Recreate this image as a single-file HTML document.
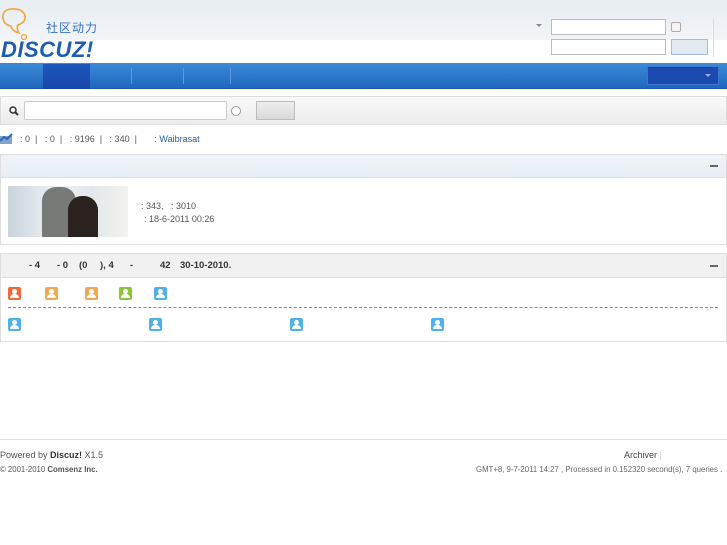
<!DOCTYPE html>
<html><head><meta charset="utf-8"><style>
*{margin:0;padding:0;box-sizing:border-box}
body{width:727px;height:545px;background:#fff;font-family:"Liberation Sans","Noto Sans CJK SC",sans-serif;font-size:9px;color:#444;position:relative;overflow:hidden}
.a{position:absolute}
.ico{position:absolute;width:13px;height:13px;border-radius:2px}
.ico:before{content:"";position:absolute;left:4px;top:2px;width:5px;height:5px;border-radius:50%;background:#fff}
.ico:after{content:"";position:absolute;left:2px;top:7px;width:9px;height:4px;border-radius:4px 4px 0 0;background:#fff}
.h{position:absolute;top:260px;font-weight:bold;color:#333;font-size:9.5px}
</style></head><body>
<div class="a" style="left:0;top:0;width:727px;height:40px;background:linear-gradient(#e8edf2,#f2f5f8)"></div>
<svg class="a" style="left:0;top:6px" width="32" height="34"><path d="M11 3 Q2 4 3 12 Q4 19 11 20 Q12 25 19 27 Q16 22 18 19 Q26 16 25 10 Q23 2 11 3Z" fill="none" stroke="#f3a63a" stroke-width="1.6"/><circle cx="24" cy="31" r="2.5" fill="none" stroke="#f3a63a" stroke-width="1.3"/></svg>
<div class="a" style="left:46px;top:21px;font-size:12px;line-height:14px;color:#3a71c0;letter-spacing:1px">社区动力</div>
<div class="a" style="left:1px;top:39px;font-size:22px;line-height:22px;font-weight:bold;font-style:italic;color:#1c5db5;letter-spacing:0.5px">DISCUZ!</div>
<div class="a" style="left:536px;top:24px;width:0;height:0;border:3px solid transparent;border-top-color:#888"></div>
<div class="a" style="left:551px;top:19px;width:115px;height:16px;border:1px solid #bbb;background:#fff"></div>
<div class="a" style="left:671px;top:22px;width:10px;height:10px;border:1px solid #aaa;border-radius:2px;background:#f4f4f4"></div>
<div class="a" style="left:551px;top:39px;width:115px;height:16px;border:1px solid #bbb;background:#fff"></div>
<div class="a" style="left:671px;top:39px;width:37px;height:16px;border:1px solid #a9bcd2;background:#e3e9f0"></div>
<div class="a" style="left:713px;top:19px;width:1px;height:38px;background:#ddd"></div>
<div class="a" style="left:0;top:63px;width:727px;height:26px;background:linear-gradient(#3c8ad8,#1f67bd);border-bottom:1px solid #1a5aa8"></div>
<div class="a" style="left:43px;top:64px;width:47px;height:25px;background:linear-gradient(#1d59bb,#1746a8)"></div>
<div class="a" style="left:131px;top:68px;width:1px;height:16px;background:#5c9ae0"></div>
<div class="a" style="left:183px;top:68px;width:1px;height:16px;background:#5c9ae0"></div>
<div class="a" style="left:230px;top:68px;width:1px;height:16px;background:#5c9ae0"></div>
<div class="a" style="left:647px;top:66px;width:72px;height:19px;background:#1b49b0;border:1px solid #3b78cc"></div>
<div class="a" style="left:705px;top:74px;border:3px solid transparent;border-top-color:#8fb0e0"></div>
<div class="a" style="left:0;top:96px;width:727px;height:29px;border:1px solid #ddd;background:linear-gradient(#fafafa,#ececec)"></div>
<svg class="a" style="left:9px;top:106px" width="10" height="10"><circle cx="4" cy="4" r="3" fill="none" stroke="#333" stroke-width="1.5"/><path d="M6 6L9 9" stroke="#333" stroke-width="2"/></svg>
<div class="a" style="left:24px;top:101px;width:203px;height:19px;border:1px solid #ccc;background:#fff;border-radius:2px"></div>
<div class="a" style="left:231px;top:106px;width:10px;height:10px;border:1px solid #999;border-radius:50%;background:#fff"></div>
<div class="a" style="left:256px;top:101px;width:39px;height:19px;border:1px solid #bbb;background:linear-gradient(#eee,#d8d8d8)"></div>
<svg class="a" style="left:0;top:132px" width="13" height="12"><rect x="0" y="4" width="12" height="8" fill="#7ea4cc"/><path d="M0 9L4 5L7 7L12 2" stroke="#2a6ab8" stroke-width="2" fill="none"/></svg>
<div class="a" style="left:20px;top:134px;color:#555">: 0 &nbsp;| &nbsp; : 0 &nbsp;| &nbsp; : 9196 &nbsp;| &nbsp; : 340 &nbsp;| &nbsp; &nbsp; &nbsp; : <span style="color:#2a5d95">Waibrasat</span></div>
<div class="a" style="left:0;top:154px;width:727px;height:91px;border:1px solid #ddd"></div>
<div class="a" style="left:1px;top:155px;width:725px;height:23px;background:linear-gradient(#f0f4f8,#e6edf4);border-bottom:1px solid #dde4ea"></div>
<div class="a" style="left:710px;top:165px;width:8px;height:2px;background:#666"></div>
<div class="a" style="left:8px;top:186px;width:120px;height:51px;background:linear-gradient(90deg,#c9d4dc,#eef1f3 40%,#e4e8ea 70%,#f3f3f0)"></div>
<div class="a" style="left:42px;top:187px;width:34px;height:50px;background:#777a77;border-radius:14px 14px 0 0"></div>
<div class="a" style="left:68px;top:196px;width:30px;height:41px;background:#2a2320;border-radius:14px 14px 0 0"></div>
<div class="a" style="left:141px;top:201px;color:#555">: 343, &nbsp; : 3010</div>
<div class="a" style="left:144px;top:214px;color:#555">: 18-6-2011 00:26</div>
<div class="a" style="left:0;top:253px;width:727px;height:89px;border:1px solid #ddd"></div>
<div class="a" style="left:1px;top:254px;width:725px;height:24px;background:#f1f1f1;border-bottom:1px solid #ddd"></div>
<span class="h" style="left:29px">- 4</span><span class="h" style="left:57px">- 0</span><span class="h" style="left:79px">(0</span><span class="h" style="left:100px">), 4</span><span class="h" style="left:130px">-</span><span class="h" style="left:160px">42</span><span class="h" style="left:180px">30-10-2010.</span>
<div class="a" style="left:710px;top:265px;width:8px;height:2px;background:#666"></div>
<div class="ico" style="left:8px;top:287px;background:#ef6a3a"></div>
<div class="ico" style="left:45px;top:287px;background:#f0a855"></div>
<div class="ico" style="left:85px;top:287px;background:#f0a855"></div>
<div class="ico" style="left:119px;top:287px;background:#8cc43a"></div>
<div class="ico" style="left:154px;top:287px;background:#4fb1e8"></div>
<div class="a" style="left:8px;top:307px;width:710px;border-top:1px dashed #888"></div>
<div class="ico" style="left:8px;top:318px;background:#4fb1e8"></div>
<div class="ico" style="left:149px;top:318px;background:#4fb1e8"></div>
<div class="ico" style="left:290px;top:318px;background:#4fb1e8"></div>
<div class="ico" style="left:431px;top:318px;background:#4fb1e8"></div>
<div class="a" style="left:0;top:439px;width:727px;height:1px;background:#ddd"></div>
<div class="a" style="left:0;top:450px;color:#555">Powered by <b style="color:#333">Discuz!</b> X1.5</div>
<div class="a" style="left:624px;top:450px;color:#444">Archiver <span style="color:#ccc">|</span></div>
<div class="a" style="left:0;top:465px;font-size:7.8px;color:#555">© 2001-2010 <b>Comsenz Inc.</b></div>
<div class="a" style="left:476px;top:465px;font-size:7.8px;color:#666">GMT+8, 9-7-2011 14:27 , Processed in 0.152320 second(s), 7 queries .</div>
</body></html>
